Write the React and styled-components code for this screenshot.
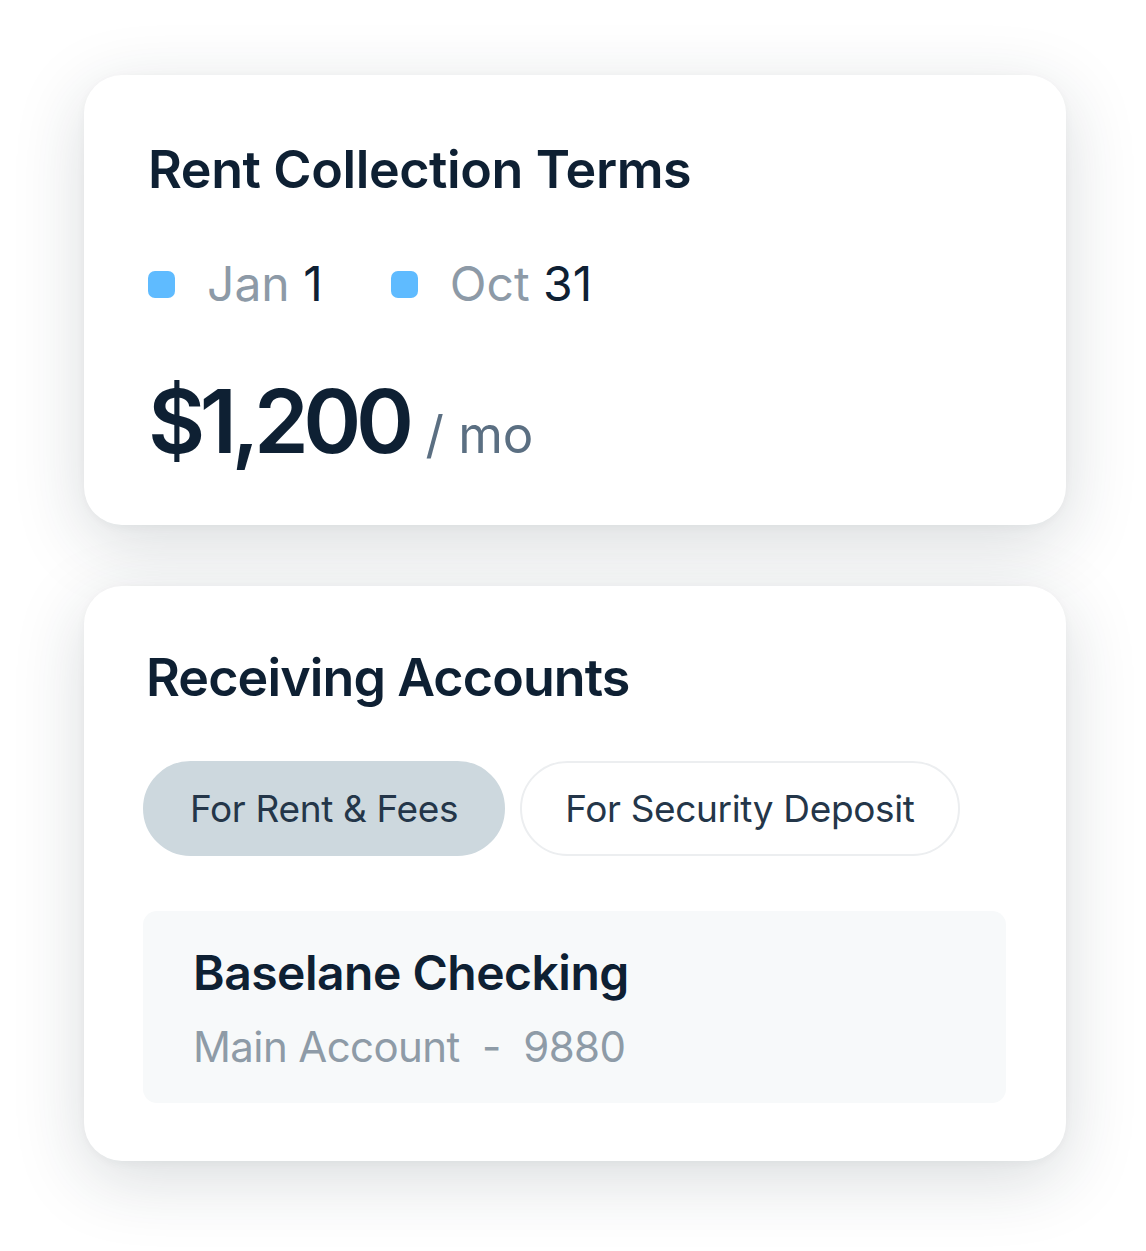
import React from 'react';
import styled, { createGlobalStyle } from 'styled-components';

const GlobalStyle = createGlobalStyle`
  html, body {
    margin: 0;
    padding: 0;
    background: #ffffff;
  }

  body {
    font-family: 'Inter', 'Liberation Sans', sans-serif;
    color: #0e2033;
    -webkit-font-smoothing: antialiased;
  }
`;

const StyledPage = styled.div`
  width: 1146px;
  min-height: 1251px;
  box-sizing: border-box;
  padding: 75px 80px 0 84px;
  display: flex;
  flex-direction: column;
  gap: 61px;
`;

const StyledCard = styled.section`
  width: 982px;
  height: ${(props) => props.$height}px;
  box-sizing: border-box;
  padding: ${(props) => props.$top}px 60px 0 64px;
  background: #ffffff;
  border-radius: 38px;
  box-shadow: 0 18px 70px rgba(32, 48, 60, 0.17), 0 2px 10px rgba(32, 48, 60, 0.04);
  display: flex;
  flex-direction: column;
`;

const StyledTitle = styled.h2`
  margin: 0;
  font-size: 52px;
  line-height: 62px;
  font-weight: 600;
  letter-spacing: ${(props) => props.$spacing || -0.4}px;
  color: #0e2033;
  margin-left: ${(props) => props.$shift || 0}px;
`;

const StyledDates = styled.div`
  display: flex;
  align-items: center;
  gap: 68px;
  margin-top: 54px;
`;

const StyledDate = styled.div`
  display: flex;
  align-items: center;
  gap: 32px;
  font-size: 48px;
  line-height: 58px;
  letter-spacing: 0;
  color: #8d9aa7;

  strong {
    font-weight: 400;
    color: #0e2033;
  }
`;

const StyledDot = styled.span`
  width: 27px;
  height: 27px;
  border-radius: 7px;
  background: #5fbbff;
  flex: none;
`;

const StyledAmount = styled.div`
  display: flex;
  align-items: baseline;
  gap: 17px;
  margin-top: 58px;

  strong {
    font-size: 88px;
    line-height: 100px;
    font-weight: 600;
    letter-spacing: -5.5px;
    color: #0e2033;
  }

  span {
    font-size: 51px;
    letter-spacing: 0;
    color: #5b6f82;
  }
`;

const StyledTabs = styled.div`
  display: flex;
  gap: 15px;
  margin-top: 52px;
  margin-left: -5px;
`;

const StyledTab = styled.button`
  height: 95px;
  box-sizing: border-box;
  padding: 0 ${(props) => (props.$active ? 45 : 43)}px;
  border-radius: 48px;
  border: 2px solid ${(props) => (props.$active ? '#cdd8de' : '#eceef0')};
  background: ${(props) => (props.$active ? '#cdd8de' : '#ffffff')};
  font-family: 'Inter', 'Liberation Sans', sans-serif;
  font-size: 37px;
  font-weight: 400;
  letter-spacing: -0.35px;
  color: #243649;
  cursor: pointer;
`;

const StyledAccount = styled.div`
  margin-top: 55px;
  margin-left: -5px;
  width: 863px;
  height: 192px;
  box-sizing: border-box;
  padding: 32px 50px 0;
  background: #f7f9fa;
  border-radius: 14px;

  h3 {
    margin: 0;
    font-size: 48px;
    line-height: 60px;
    font-weight: 600;
    letter-spacing: -0.5px;
    color: #0e2033;
  }

  p {
    margin: 18px 0 0;
    font-size: 42px;
    line-height: 52px;
    letter-spacing: -0.6px;
    color: #8e9ba7;
    white-space: pre;
  }
`;

const App = () => (
  <>
    <GlobalStyle />
    <StyledPage>
      <StyledCard $height={450} $top={64}>
        <StyledTitle>Rent Collection Terms</StyledTitle>
        <StyledDates>
          <StyledDate>
            <StyledDot />
            <span>Jan <strong>1</strong></span>
          </StyledDate>
          <StyledDate>
            <StyledDot />
            <span>Oct <strong>31</strong></span>
          </StyledDate>
        </StyledDates>
        <StyledAmount>
          <strong>$1,200</strong>
          <span>/ mo</span>
        </StyledAmount>
      </StyledCard>

      <StyledCard $height={575} $top={61}>
        <StyledTitle $shift={-2} $spacing={-0.9}>Receiving Accounts</StyledTitle>
        <StyledTabs>
          <StyledTab $active>For Rent &amp; Fees</StyledTab>
          <StyledTab>For Security Deposit</StyledTab>
        </StyledTabs>
        <StyledAccount>
          <h3>Baselane Checking</h3>
          <p>Main Account  -  9880</p>
        </StyledAccount>
      </StyledCard>
    </StyledPage>
  </>
);

export default App;
